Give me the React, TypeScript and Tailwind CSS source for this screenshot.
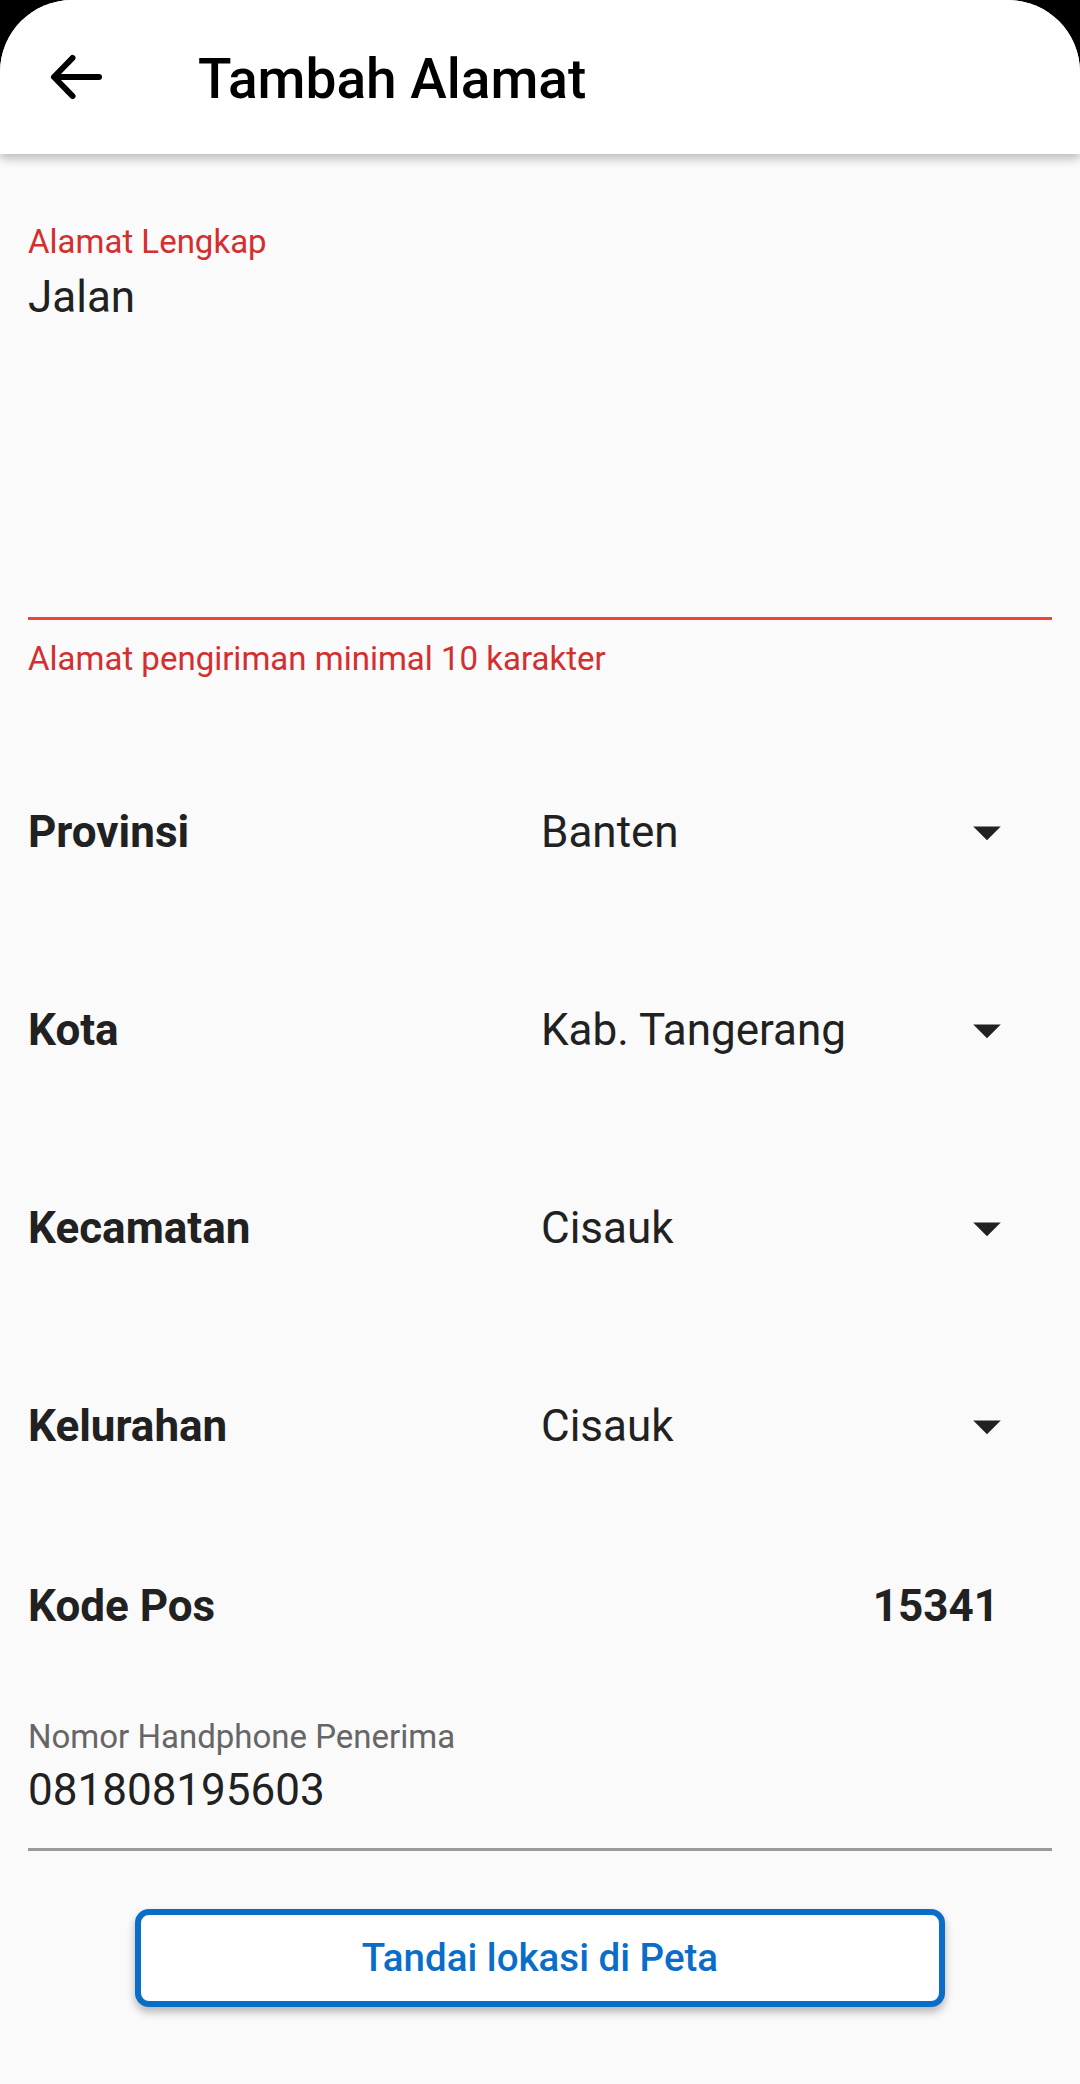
import React from "react";

const rows = [
  { label: "Provinsi", value: "Banten" },
  { label: "Kota", value: "Kab. Tangerang" },
  { label: "Kecamatan", value: "Cisauk" },
  { label: "Kelurahan", value: "Cisauk" },
];

function DropIcon() {
  return (
    <svg width="66" height="66" viewBox="0 0 24 24" className="shrink-0">
      <path d="M7 10l5 5 5-5z" fill="#212121" />
    </svg>
  );
}

export default function App() {
  return (
    <div className="w-[1080px] h-[2084px] bg-black" style={{ fontFamily: "Roboto, 'Noto Sans', sans-serif" }}>
      <div className="h-full bg-[#fafafa] rounded-t-[72px] overflow-hidden flex flex-col">
        {/* App bar */}
        <div className="relative z-10 h-[154px] shrink-0 bg-white flex items-center shadow-[0_4px_10px_rgba(0,0,0,0.28)]">
          <div className="ml-[44px] w-[66px] h-[66px] flex items-center justify-center">
            <svg width="66" height="66" viewBox="0 0 66 66">
              <path d="M11 33H55" stroke="#000" strokeWidth="6" strokeLinecap="round" fill="none" />
              <path d="M28.5 14L10 33L28.5 52" stroke="#000" strokeWidth="6" strokeLinecap="round" strokeLinejoin="round" fill="none" />
            </svg>
          </div>
          <div className="ml-[88px] mt-[4px] text-[55px] font-medium text-black leading-none">Tambah Alamat</div>
        </div>

        {/* Body */}
        <div className="px-[28px] flex flex-col">
          {/* Alamat Lengkap */}
          <div className="mt-[68px] text-[33px] leading-[40px] text-[#d32f2f]">Alamat Lengkap</div>
          <div className="mt-[9px] h-[346px] text-[44px] leading-[52px] text-[#212121]">Jalan</div>
          <div className="h-[3px] bg-[#f44336]" />
          <div className="mt-[19px] text-[33px] leading-[40px] text-[#d32f2f]">Alamat pengiriman minimal 10 karakter</div>

          {/* Dropdown rows */}
          <div className="mt-[54px] flex flex-col">
            {rows.map((r) => (
              <div key={r.label} className="h-[198px] flex items-center">
                <div className="w-1/2 text-[44px] font-bold text-[#212121]">{r.label}</div>
                <div className="w-1/2 flex items-center justify-between pr-[32px]">
                  <span className="pl-[1px] text-[44px] text-[#212121]">{r.value}</span>
                  <DropIcon />
                </div>
              </div>
            ))}
            <div className="h-[162px] flex items-center">
              <div className="flex-1 text-[44px] font-bold text-[#212121]">Kode Pos</div>
              <div className="pr-[53px] text-[44px] font-bold text-[#212121]">15341</div>
            </div>
          </div>

          {/* Phone field */}
          <div className="mt-[30px] text-[33px] leading-[40px] text-[#666666]">Nomor Handphone Penerima</div>
          <div className="mt-[7px] text-[44px] leading-[52px] text-[#212121]">081808195603</div>
          <div className="mt-[32px] h-[3px] bg-[#9a9a9a]" />

          {/* Button */}
          <div className="mt-[58px] flex justify-center">
            <button className="w-[810px] h-[98px] bg-white border-[6px] border-[#0a6dc8] rounded-[14px] shadow-[0_5px_8px_rgba(0,0,0,0.28)] flex items-center justify-center">
              <span className="text-[38.5px] font-medium text-[#0a6dc8]">Tandai lokasi di Peta</span>
            </button>
          </div>
        </div>
      </div>
    </div>
  );
}
